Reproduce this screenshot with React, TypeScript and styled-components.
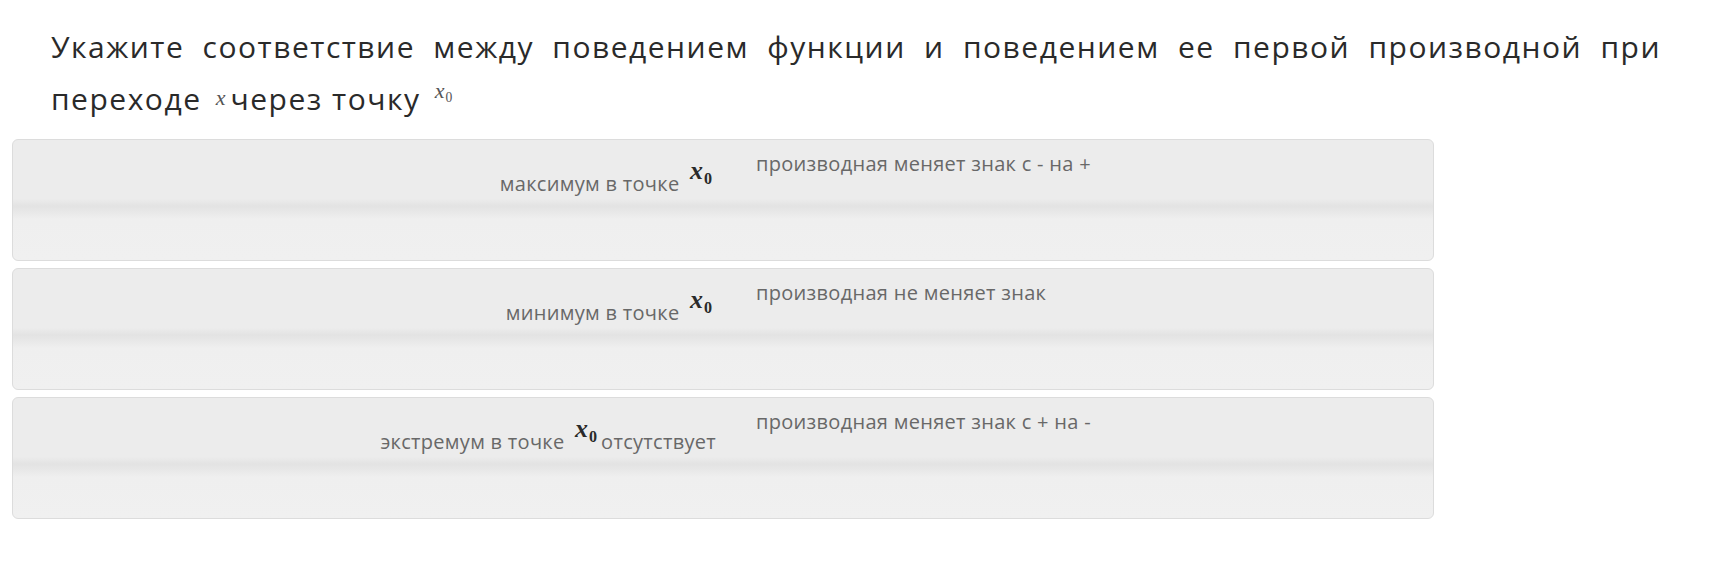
import React from 'react';
import styled, { createGlobalStyle } from 'styled-components';

const GlobalStyle = createGlobalStyle`
  html, body {
    margin: 0;
    padding: 0;
    background: #ffffff;
  }
  body {
    font-family: "Open Sans", "DejaVu Sans", sans-serif;
  }
`;

const Page = styled.div`
  padding-top: 21px;
`;

const Question = styled.div`
  margin-left: 51px;
  width: 1610px;
  font-size: 30px;
  letter-spacing: 1.5px;
  line-height: 52px;
  color: #2a2a2a;
`;

// first line is stretched edge to edge like the original justified text
const FullLine = styled.div`
  text-align: justify;
  text-align-last: justify;
`;

const LastLine = styled.div`
  text-align: left;
`;

const Formula = styled.span<{ $size: number; $raise: number; $bold?: boolean; $ml: number; $mr: number }>`
  display: inline-block;
  font-family: "Liberation Serif", "DejaVu Serif", serif;
  font-style: italic;
  font-weight: ${(p) => (p.$bold ? 700 : 400)};
  font-size: ${(p) => p.$size}px;
  letter-spacing: 0;
  line-height: 1;
  vertical-align: ${(p) => p.$raise}px;
  margin: 0 ${(p) => p.$mr}px 0 ${(p) => p.$ml}px;
  color: ${(p) => (p.$bold ? '#2a2a2a' : '#555555')};

  sub {
    font-style: normal;
    font-size: 0.62em;
    line-height: 0;
    vertical-align: -0.28em;
    margin-left: 1px;
  }
`;

const Cards = styled.div`
  margin: 14px 0 0 12px;
  width: 1422px;
  display: flex;
  flex-direction: column;
  gap: 7px;
`;

const Card = styled.div`
  box-sizing: border-box;
  height: 122px;
  border: 1px solid #dcdcdc;
  border-radius: 6px;
  background: linear-gradient(
    to bottom,
    #ececec 0%,
    #ececec 49%,
    #e3e3e3 55%,
    #e8e8e8 60%,
    #efefef 66%,
    #f0f0f0 100%
  );
  display: grid;
  grid-template-columns: 703px 1fr;
  column-gap: 40px;
  align-items: start;
  padding-top: 11px;
  font-size: 20px;
  letter-spacing: 0.3px;
  line-height: 26px;
  color: #686868;
`;

const Term = styled.div`
  text-align: right;
  padding-top: 7px;
`;

const Definition = styled.div`
  text-align: left;
`;

const X0 = () => (
  <Formula $size={26} $raise={12} $bold $ml={5} $mr={4}>
    x<sub>0</sub>
  </Formula>
);

const pairs = [
  { before: 'максимум в точке', after: '', answer: 'производная меняет знак с - на +' },
  { before: 'минимум в точке', after: '', answer: 'производная не меняет знак' },
  { before: 'экстремум в точке', after: 'отсутствует', answer: 'производная меняет знак с + на -' },
];

export default function App() {
  return (
    <Page>
      <GlobalStyle />
      <Question>
        <FullLine>
          Укажите соответствие между поведением функции и поведением ее первой производной при
        </FullLine>
        <LastLine>
          переходе{' '}
          <Formula $size={22} $raise={5} $ml={5} $mr={5}>
            x
          </Formula>
          через точку{' '}
          <Formula $size={22} $raise={12} $ml={5} $mr={0}>
            x<sub>0</sub>
          </Formula>
        </LastLine>
      </Question>
      <Cards>
        {pairs.map((p) => (
          <Card key={p.before}>
            <Term>
              {p.before} <X0 />
              {p.after}
            </Term>
            <Definition>{p.answer}</Definition>
          </Card>
        ))}
      </Cards>
    </Page>
  );
}
